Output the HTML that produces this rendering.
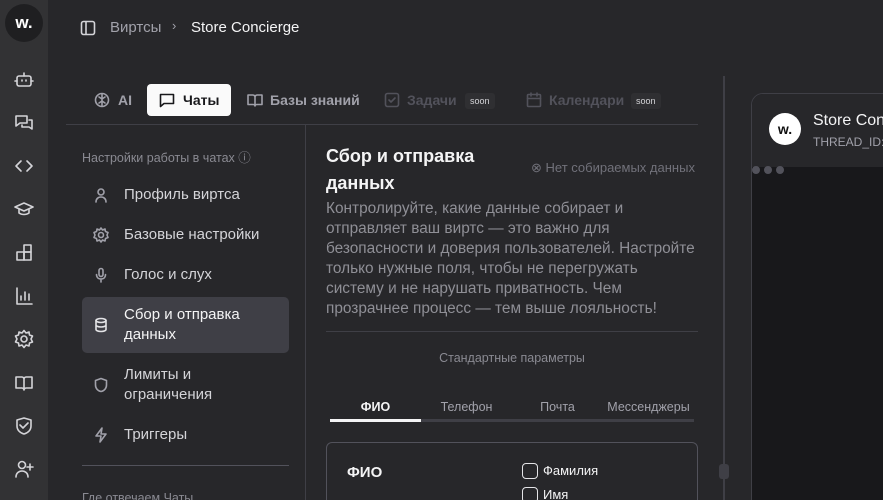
<!DOCTYPE html>
<html><head><meta charset="utf-8"><style>
*{box-sizing:border-box;margin:0;padding:0}
html,body{width:883px;height:500px;overflow:hidden}
body{background:#27272a;font-family:"Liberation Sans",sans-serif;color:#e4e4e7;position:relative}
.abs{position:absolute}
.side{left:0;top:0;width:48px;height:500px;background:#323234}
.logo{left:5px;top:4px;width:38px;height:38px;border-radius:50%;background:#1f1f21;color:#fff;font-weight:bold;font-size:17px;text-align:center;line-height:38px}
.si{position:absolute;left:14px;width:20px;height:20px}
svg{fill:none;stroke:currentColor;stroke-width:1.6;stroke-linecap:round;stroke-linejoin:round}
.t{font-size:15px;white-space:nowrap}
.gray{color:#a1a1aa}
.dim{color:#71717a}
.soon{font-size:9px;color:#d4d4d8;background:#2f2f32;padding:3px 5px;border-radius:3px}
.nav{position:absolute;left:82px;width:207px;font-size:15px;color:#d4d4d8;line-height:20px}
.nav svg{position:absolute;left:11px;width:16px;height:16px;color:#a1a1aa}
.nav span{position:absolute;left:42px}
</style></head><body>
<div class="abs side">
<div class="abs logo">w.</div>
<svg class="si" style="top:70px;color:#d4d4d8" viewBox="0 0 20 20"><rect x="3" y="6" width="14" height="10" rx="2"/><path d="M10 3v3M1 11h2M17 11h2M8 10v1M12 10v1"/></svg>
<svg class="si" style="top:113px;color:#d4d4d8" viewBox="0 0 20 20"><path d="M2 3h11v7H6l-4 3z"/><path d="M15 7h3v9l-3-2H8v-2"/></svg>
<svg class="si" style="top:156px;color:#d4d4d8" viewBox="0 0 20 20"><path d="M7 5l-5 5 5 5M13 5l5 5-5 5"/></svg>
<svg class="si" style="top:199px;color:#d4d4d8" viewBox="0 0 20 20"><path d="M1 8l9-4 9 4-9 4z"/><path d="M5 10v4c3 2 7 2 10 0v-4"/></svg>
<svg class="si" style="top:243px;color:#d4d4d8" viewBox="0 0 20 20"><rect x="3" y="9" width="7" height="8"/><rect x="10" y="9" width="7" height="8"/><rect x="10" y="2" width="7" height="7"/></svg>
<svg class="si" style="top:286px;color:#d4d4d8" viewBox="0 0 20 20"><path d="M3 2v16h15M7 14v-4M11 14V6M15 14v-6"/></svg>
<svg class="si" style="top:329px;color:#d4d4d8" viewBox="0 0 20 20"><circle cx="10" cy="10" r="3"/><path d="M10 1.5l2 2.5 3-1 .5 3 3 1-1.5 3 1.5 3-3 1-.5 3-3-1-2 2.5-2-2.5-3 1-.5-3-3-1 1.5-3-1.5-3 3-1 .5-3 3 1z"/></svg>
<svg class="si" style="top:373px;color:#d4d4d8" viewBox="0 0 20 20"><path d="M2 4h6c1 0 2 1 2 2v11c0-1-1-2-2-2H2zM18 4h-6c-1 0-2 1-2 2v11c0-1 1-2 2-2h6z"/></svg>
<svg class="si" style="top:416px;color:#d4d4d8" viewBox="0 0 20 20"><path d="M3 4l7-2 7 2v6c0 4-3 7-7 8-4-1-7-4-7-8z"/><path d="M6 9l3 3 5-5"/></svg>
<svg class="si" style="top:459px;color:#d4d4d8" viewBox="0 0 20 20"><circle cx="8" cy="6" r="3.5"/><path d="M2 18c0-4 3-6 6-6s6 2 6 6M16 5v6M13 8h6"/></svg>
</div>
<svg class="abs" style="left:80px;top:20px;width:16px;height:16px;color:#d4d4d8" viewBox="0 0 16 16"><rect x="1.5" y="1.5" width="13" height="13" rx="2"/><path d="M6 2v12"/></svg>
<div class="abs t gray" style="left:110px;top:19px">Виртсы</div>
<div class="abs t gray" style="left:172px;top:18px;font-size:13px">›</div>
<div class="abs t" style="left:191px;top:19px;color:#f4f4f5">Store Concierge</div>

<svg class="abs" style="left:94px;top:92px;width:16px;height:16px;color:#a1a1aa" viewBox="0 0 16 16"><circle cx="8" cy="8" r="6.5"/><path d="M8 2v12M5 5l3 2 3-2M5 11l3-2 3 2"/></svg>
<div class="abs t" style="left:118px;top:92px;color:#a1a1aa;font-weight:bold;font-size:14px">AI</div>
<div class="abs" style="left:147px;top:84px;width:84px;height:32px;background:#fafafa;border-radius:4px"></div>
<svg class="abs" style="left:159px;top:92px;width:16px;height:16px;color:#18181b" viewBox="0 0 16 16"><path d="M1.5 2.5h13v9H5l-3.5 3z"/></svg>
<div class="abs t" style="left:183px;top:92px;color:#18181b;font-weight:bold;font-size:14px">Чаты</div>
<svg class="abs" style="left:247px;top:92px;width:16px;height:16px;color:#a1a1aa" viewBox="0 0 16 16"><path d="M1 3h5c1 0 2 1 2 2v9c0-1-1-1.5-2-1.5H1zM15 3h-5c-1 0-2 1-2 2v9c0-1 1-1.5 2-1.5h5z"/></svg>
<div class="abs t" style="left:270px;top:92px;color:#a1a1aa;font-weight:bold;font-size:14px">Базы знаний</div>
<svg class="abs" style="left:384px;top:92px;width:16px;height:16px;color:#52525b" viewBox="0 0 16 16"><rect x="1.5" y="1.5" width="13" height="13" rx="2"/><path d="M5 8l2 2 4-4"/></svg>
<div class="abs t" style="left:407px;top:92px;color:#52525b;font-weight:bold;font-size:14px">Задачи</div>
<div class="abs soon" style="left:465px;top:93px">soon</div>
<svg class="abs" style="left:526px;top:92px;width:16px;height:16px;color:#52525b" viewBox="0 0 16 16"><rect x="1.5" y="2.5" width="13" height="12" rx="1"/><path d="M1.5 6.5h13M5 1v3M11 1v3"/></svg>
<div class="abs t" style="left:549px;top:92px;color:#52525b;font-weight:bold;font-size:14px">Календари</div>
<div class="abs soon" style="left:631px;top:93px">soon</div>

<div class="abs" style="left:66px;top:124px;width:632px;height:1px;background:#3f3f46"></div>
<div class="abs" style="left:305px;top:125px;width:1px;height:375px;background:#3f3f46"></div>
<div class="abs" style="left:723px;top:76px;width:2px;height:424px;background:#3f3f46"></div>
<div class="abs" style="left:719px;top:464px;width:10px;height:15px;background:#3f3f46;border-radius:3px"></div>

<div class="abs dim" style="left:82px;top:147px;font-size:12.5px;color:#8a8a92">Настройки работы в чатах ⓘ</div>
<div class="nav" style="top:185px"><svg style="top:2px" viewBox="0 0 16 16"><circle cx="8" cy="5" r="3"/><path d="M3 15c0-3 2-5 5-5s5 2 5 5"/></svg><span>Профиль виртса</span></div>
<div class="nav" style="top:225px"><svg style="top:2px" viewBox="0 0 16 16"><circle cx="8" cy="8" r="2.5"/><path d="M8 1l1.5 2 2.5-1 .5 2.5 2.5 1-1 2.5 1 2.5-2.5 1-.5 2.5-2.5-1L8 15l-1.5-2-2.5 1-.5-2.5-2.5-1 1-2.5-1-2.5 2.5-1L4 2l2.5 1z"/></svg><span>Базовые настройки</span></div>
<div class="nav" style="top:265px"><svg style="top:2px" viewBox="0 0 16 16"><rect x="6" y="1.5" width="4" height="8" rx="2"/><path d="M3.5 7.5c0 3 2 4.5 4.5 4.5s4.5-1.5 4.5-4.5M8 12v3"/></svg><span>Голос и слух</span></div>
<div class="abs" style="left:82px;top:297px;width:207px;height:56px;background:#3f3f46;border-radius:5px"></div>
<div class="nav" style="top:305px;color:#f4f4f5"><svg style="top:12px;color:#e4e4e7" viewBox="0 0 16 16"><ellipse cx="8" cy="3.5" rx="5" ry="2"/><path d="M3 3.5v9c0 1 2 2 5 2s5-1 5-2v-9M3 8c0 1 2 2 5 2s5-1 5-2"/></svg><span>Сбор и отправка<br>данных</span></div>
<div class="nav" style="top:365px"><svg style="top:12px" viewBox="0 0 16 16"><path d="M8 1.5l5.5 2v4.5c0 3.5-2.5 6-5.5 6.5-3-.5-5.5-3-5.5-6.5V3.5z"/></svg><span>Лимиты и<br>ограничения</span></div>
<div class="nav" style="top:425px"><svg style="top:2px" viewBox="0 0 16 16"><path d="M9 1L3 9h5l-1 6 6-8H8z"/></svg><span>Триггеры</span></div>
<div class="abs" style="left:82px;top:465px;width:207px;height:1px;background:#52525b"></div>
<div class="abs" style="left:82px;top:491px;font-size:12.5px;color:#8a8a92">Где отвечаем Чаты</div>

<div class="abs" style="left:326px;top:143px;font-size:18px;font-weight:bold;line-height:27px;color:#f4f4f5">Сбор и отправка<br>данных</div>
<div class="abs" style="left:531px;top:160px;font-size:13px;color:#71717a;white-space:nowrap">⊗ Нет собираемых данных</div>
<div class="abs" style="left:326px;top:199px;width:400px;font-size:15.4px;line-height:20px;color:#8f8f96;white-space:nowrap">Контролируйте, какие данные собирает и<br>отправляет ваш виртс — это важно для<br>безопасности и доверия пользователей. Настройте<br>только нужные поля, чтобы не перегружать<br>систему и не нарушать приватность. Чем<br>прозрачнее процесс — тем выше лояльность!</div>
<div class="abs" style="left:326px;top:331px;width:372px;height:1px;background:#3f3f46"></div>
<div class="abs" style="left:326px;top:351px;width:372px;text-align:center;font-size:12.5px;color:#8a8a92">Стандартные параметры</div>
<div class="abs" style="left:330px;top:419px;width:364px;height:3px;background:#3f3f46"></div>
<div class="abs" style="left:330px;top:419px;width:91px;height:3px;background:#f4f4f5"></div>
<div class="abs" style="left:330px;top:400px;width:91px;text-align:center;font-size:12.5px;font-weight:bold;color:#f4f4f5">ФИО</div>
<div class="abs" style="left:421px;top:400px;width:91px;text-align:center;font-size:12.5px;color:#a1a1aa">Телефон</div>
<div class="abs" style="left:512px;top:400px;width:91px;text-align:center;font-size:12.5px;color:#a1a1aa">Почта</div>
<div class="abs" style="left:603px;top:400px;width:91px;text-align:center;font-size:12.5px;color:#a1a1aa">Мессенджеры</div>
<div class="abs" style="left:326px;top:442px;width:372px;height:70px;border:1px solid #52525b;border-radius:6px"></div>
<div class="abs" style="left:347px;top:464px;font-size:15px;font-weight:bold;color:#f4f4f5">ФИО</div>
<div class="abs" style="left:522px;top:463px;width:16px;height:16px;border:1.5px solid #e4e4e7;border-radius:4px"></div>
<div class="abs" style="left:543px;top:463px;font-size:13px;color:#f4f4f5">Фамилия</div>
<div class="abs" style="left:522px;top:487px;width:16px;height:16px;border:1.5px solid #e4e4e7;border-radius:4px"></div>
<div class="abs" style="left:543px;top:487px;font-size:13px;color:#f4f4f5">Имя</div>

<div class="abs" style="left:751px;top:93px;width:150px;height:420px;background:#18181b;border:1px solid #3f3f46;border-radius:12px;overflow:hidden">
<div class="abs" style="left:0;top:0;width:150px;height:73px;background:#27272a"></div>
<div class="abs" style="left:17px;top:19px;width:32px;height:32px;border-radius:50%;background:#fff;color:#111;font-weight:bold;font-size:14px;text-align:center;line-height:32px">w.</div>
<div class="abs" style="left:61px;top:18px;font-size:16px;color:#f4f4f5;white-space:nowrap">Store Concierge</div>
<div class="abs" style="left:61px;top:41px;font-size:12px;color:#a1a1aa;white-space:nowrap">THREAD_ID:</div>
<div class="abs" style="left:0;top:72px;width:8px;height:8px;border-radius:50%;background:#52525b"></div>
<div class="abs" style="left:12px;top:72px;width:8px;height:8px;border-radius:50%;background:#52525b"></div>
<div class="abs" style="left:24px;top:72px;width:8px;height:8px;border-radius:50%;background:#52525b"></div>
</div>
</body></html>
